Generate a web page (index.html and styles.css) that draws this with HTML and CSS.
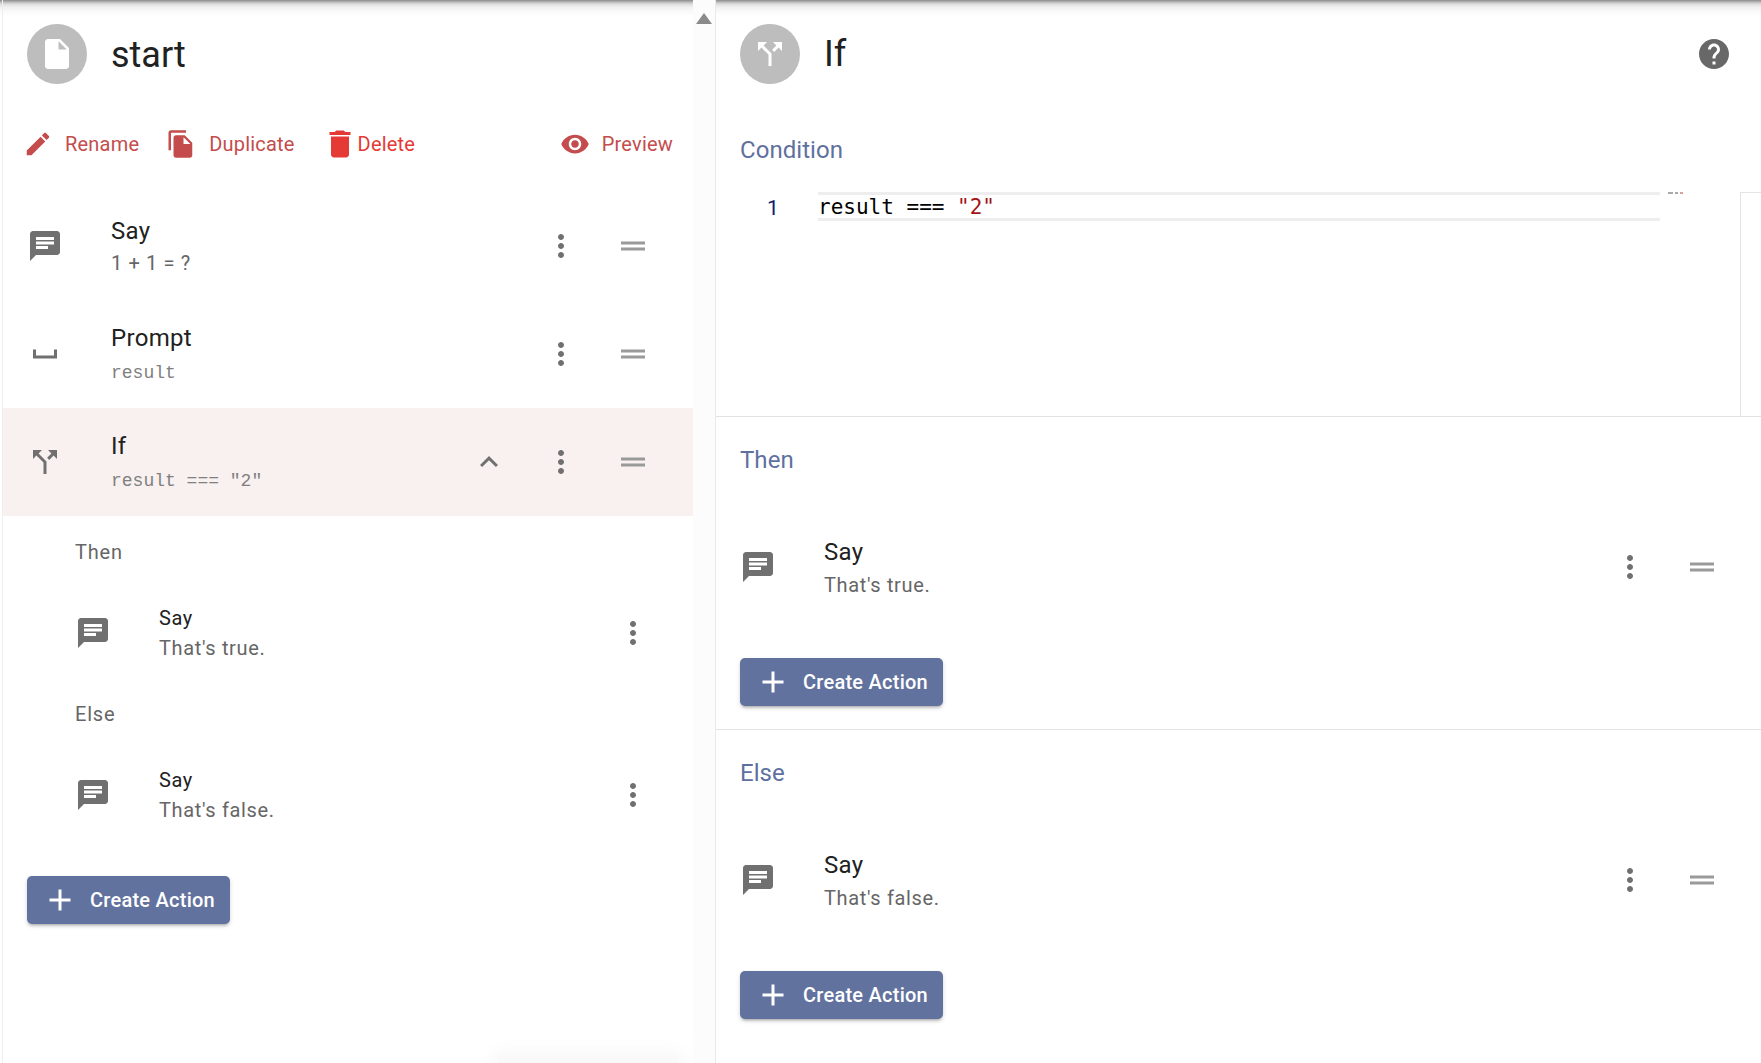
FILE: index.html
```html
<!DOCTYPE html>
<html lang="en">
<head>
<meta charset="utf-8">
<title>start</title>
<link rel="stylesheet" href="styles.css">
</head>
<body>
<svg class="sprites" aria-hidden="true">
  <symbol id="i-chat" viewBox="0 0 24 24"><path d="M20 2H4c-1.1 0-1.99.9-1.99 2L2 22l4-4h14c1.1 0 2-.9 2-2V4c0-1.1-.9-2-2-2zM6 9h12v2H6V9zm8 5H6v-2h8v2zm4-6H6V6h12v2z"/></symbol>
  <symbol id="i-space" viewBox="0 0 24 24"><path d="M18 9v4H6V9H4v6h16V9z"/></symbol>
  <symbol id="i-split" viewBox="0 0 24 24"><path d="M14 4l2.29 2.29-2.88 2.88 1.42 1.42 2.88-2.88L20 10V4zm-4 0H4v6l2.29-2.29 4.71 4.7V20h2v-8.41l-5.29-5.3z"/></symbol>
  <symbol id="i-up" viewBox="0 0 24 24"><path d="M7.41 15.41L12 10.83l4.59 4.58L18 14l-6-6-6 6z"/></symbol>
  <symbol id="i-more" viewBox="0 0 24 24"><path d="M12 8c1.1 0 2-.9 2-2s-.9-2-2-2-2 .9-2 2 .9 2 2 2zm0 2c-1.1 0-2 .9-2 2s.9 2 2 2 2-.9 2-2-.9-2-2-2zm0 6c-1.1 0-2 .9-2 2s.9 2 2 2 2-.9 2-2-.9-2-2-2z"/></symbol>
  <symbol id="i-drag" viewBox="0 0 24 24"><path d="M20 9H4v2h16V9zM4 15h16v-2H4v2z"/></symbol>
  <symbol id="i-pencil" viewBox="0 0 24 24"><path d="M3 17.25V21h3.75L17.81 9.94l-3.75-3.75L3 17.25zM20.71 7.04c.39-.39.39-1.02 0-1.41l-2.34-2.34c-.39-.39-1.02-.39-1.41 0l-1.83 1.83 3.75 3.75 1.83-1.83z"/></symbol>
  <symbol id="i-copy" viewBox="0 0 24 24"><path d="M16 1H4c-1.1 0-2 .9-2 2v14h2V3h12V1zm-1 4l6 6v10c0 1.1-.9 2-2 2H7.99C6.89 23 6 22.1 6 21l.01-14c0-1.1.89-2 1.99-2h7zm-1 7h5.5L14 6.5V12z"/></symbol>
  <symbol id="i-delete" viewBox="0 0 24 24"><path d="M6 19c0 1.1.9 2 2 2h8c1.1 0 2-.9 2-2V7H6v12zM19 4h-3.5l-1-1h-5l-1 1H5v2h14V4z"/></symbol>
  <symbol id="i-eye" viewBox="0 0 24 24"><path d="M12 4.5C7 4.5 2.73 7.61 1 12c1.73 4.39 6 7.5 11 7.5s9.27-3.11 11-7.5c-1.73-4.39-6-7.5-11-7.5zM12 17c-2.76 0-5-2.24-5-5s2.24-5 5-5 5 2.24 5 5-2.24 5-5 5zm0-8c-1.66 0-3 1.34-3 3s1.34 3 3 3 3-1.34 3-3-1.34-3-3-3z"/></symbol>
  <symbol id="i-file" viewBox="0 0 24 24"><path d="M6 2c-1.1 0-1.99.9-1.99 2L4 20c0 1.1.89 2 1.99 2H18c1.1 0 2-.9 2-2V8l-6-6H6zm7 7V3.5L18.5 9H13z"/></symbol>
  <symbol id="i-help" viewBox="0 0 24 24"><path d="M12 2C6.48 2 2 6.48 2 12s4.48 10 10 10 10-4.48 10-10S17.52 2 12 2zm1 17h-2v-2h2v2zm2.07-7.75l-.9.92C13.45 12.9 13 13.5 13 15h-2v-.5c0-1.1.45-2.1 1.17-2.83l1.24-1.26c.37-.36.59-.86.59-1.41 0-1.1-.9-2-2-2s-2 .9-2 2H8c0-2.21 1.79-4 4-4s4 1.79 4 4c0 .88-.36 1.68-.93 2.25z"/></symbol>
  <symbol id="i-plus" viewBox="0 0 24 24"><path d="M19 13h-6v6h-2v-6H5v-2h6V5h2v6h6v2z"/></symbol>
</svg>

<div class="app">
  <div class="topshade"></div>

  <section class="left">
    <header class="head">
      <span class="avatar"><svg class="ic"><use href="#i-file"/></svg></span>
      <h1 class="head-title">start</h1>
    </header>

    <nav class="toolbar">
      <a class="tool tool-rename"><svg class="ic-30"><use href="#i-pencil"/></svg><span>Rename</span></a>
      <a class="tool tool-dup"><svg class="ic-30"><use href="#i-copy"/></svg><span>Duplicate</span></a>
      <a class="tool tool-del"><svg class="ic"><use href="#i-delete"/></svg><span>Delete</span></a>
      <a class="tool tool-preview"><svg class="ic-30"><use href="#i-eye"/></svg><span>Preview</span></a>
    </nav>

    <div class="row">
      <svg class="ic row-ic"><use href="#i-chat"/></svg>
      <div class="row-text"><div class="title">Say</div><div class="sub">1 + 1 = ?</div></div>
      <span class="btn"><svg class="ic"><use href="#i-more"/></svg></span>
      <span class="btn btn-drag"><svg class="ic"><use href="#i-drag"/></svg></span>
    </div>
    <div class="row">
      <svg class="ic row-ic"><use href="#i-space"/></svg>
      <div class="row-text row-text-code"><div class="title">Prompt</div><div class="sub mono">result</div></div>
      <span class="btn"><svg class="ic"><use href="#i-more"/></svg></span>
      <span class="btn btn-drag"><svg class="ic"><use href="#i-drag"/></svg></span>
    </div>
    <div class="row row-active">
      <svg class="ic row-ic"><use href="#i-split"/></svg>
      <div class="row-text row-text-code"><div class="title">If</div><div class="sub mono">result === "2"</div></div>
      <span class="btn"><svg class="ic"><use href="#i-up"/></svg></span>
      <span class="btn"><svg class="ic"><use href="#i-more"/></svg></span>
      <span class="btn btn-drag"><svg class="ic"><use href="#i-drag"/></svg></span>
    </div>

    <div class="branch-label">Then</div>
    <div class="nested">
      <svg class="ic row-ic"><use href="#i-chat"/></svg>
      <div class="row-text"><div class="title-sm">Say</div><div class="sub-sm">That's true.</div></div>
      <span class="btn"><svg class="ic"><use href="#i-more"/></svg></span>
    </div>
    <div class="branch-label">Else</div>
    <div class="nested">
      <svg class="ic row-ic"><use href="#i-chat"/></svg>
      <div class="row-text"><div class="title-sm">Say</div><div class="sub-sm">That's false.</div></div>
      <span class="btn"><svg class="ic"><use href="#i-more"/></svg></span>
    </div>

    <div class="left-create">
      <button class="create"><svg class="ic"><use href="#i-plus"/></svg><span>Create Action</span></button>
    </div>
    <div class="ghost"></div>
  </section>

  <div class="gutter"><span class="arrow"></span></div>

  <main class="right">
    <header class="head">
      <span class="avatar avatar-r"><svg class="ic"><use href="#i-split"/></svg></span>
      <h2 class="head-title head-if">If</h2>
      <svg class="ic help"><use href="#i-help"/></svg>
    </header>

    <section class="cond">
      <h3 class="sec-title sec-cond">Condition</h3>
      <div class="editor">
        <div class="lineno">1</div>
        <div class="code"><span>result === </span><span class="str">"2"</span></div>
        <div class="mini"><i class="tick"></i><i class="tick tick-s"></i><i class="tick tick-r"></i></div>
        <div class="ruler"></div>
      </div>
    </section>

    <section class="branch">
      <h3 class="sec-title">Then</h3>
      <div class="row row-r">
        <svg class="ic row-ic"><use href="#i-chat"/></svg>
        <div class="row-text"><div class="title">Say</div><div class="sub">That's true.</div></div>
        <span class="btn"><svg class="ic"><use href="#i-more"/></svg></span>
        <span class="btn btn-drag"><svg class="ic"><use href="#i-drag"/></svg></span>
      </div>
      <button class="create"><svg class="ic"><use href="#i-plus"/></svg><span>Create Action</span></button>
    </section>

    <section class="branch">
      <h3 class="sec-title">Else</h3>
      <div class="row row-r">
        <svg class="ic row-ic"><use href="#i-chat"/></svg>
        <div class="row-text"><div class="title">Say</div><div class="sub">That's false.</div></div>
        <span class="btn"><svg class="ic"><use href="#i-more"/></svg></span>
        <span class="btn btn-drag"><svg class="ic"><use href="#i-drag"/></svg></span>
      </div>
      <button class="create"><svg class="ic"><use href="#i-plus"/></svg><span>Create Action</span></button>
    </section>
  </main>
</div>
</body>
</html>
```
FILE: styles.css
```css
* { box-sizing: border-box; }
html, body { margin: 0; height: 100%; background: #fff; overflow: hidden; }
body { font-family: Roboto, "Liberation Sans", sans-serif; color: #212121; }
.sprites { display: none; }
h1, h2, h3 { margin: 0; font-weight: 400; }

.app { position: relative; display: flex; height: 1063px; width: 1761px; overflow: hidden; }
.topshade {
  position: absolute; left: 0; right: 0; top: 0; height: 16px; pointer-events: none;
  background: linear-gradient(#8a8a8a 0, #b8b8b8 2px, #dcdcdc 4px, #f0f0f0 7px, #f9f9f9 11px, rgba(255,255,255,0) 16px);
}

.ic { width: 36px; height: 36px; fill: currentColor; display: block; flex: none; }
.ic-30 { width: 30px; height: 30px; fill: currentColor; display: block; flex: none; }

.left { position: relative; width: 691px; margin-left: 2px; border-left: 1px solid #eee; flex: none; }
.gutter { position: relative; width: 23px; flex: none; background: #fcfcfc; border-right: 1px solid #e9e9e9; }
.arrow {
  position: absolute; left: 3px; top: 13px; width: 0; height: 0;
  border-left: 8px solid transparent; border-right: 8px solid transparent; border-bottom: 11px solid #8a8a8a;
}
.right { flex: 1; min-width: 0; }

.head { display: flex; align-items: center; height: 108px; padding-left: 24px; }
.avatar {
  width: 60px; height: 60px; border-radius: 50%; background: #bdbdbd; color: #fff;
  display: flex; align-items: center; justify-content: center; flex: none;
}
.head-title { font-size: 36px; line-height: 48px; margin: 2px 0 0 24px; color: #212121; }
.head-if { margin: 0 0 0 24px; }
.help { margin-left: auto; margin-right: 29px; color: #686868; }

.toolbar { display: flex; align-items: center; height: 72px; margin-bottom: 12px; color: #c44c4c; font-size: 20px; letter-spacing: .2px; }
.tool { display: flex; align-items: center; line-height: 36px; }
.tool-rename { margin-left: 20px; gap: 12px; }
.tool-dup { margin-left: 27px; gap: 13px; }
.tool-del { margin-left: 27px; gap: 0; color: #e53935; }
.tool-preview { margin-left: auto; margin-right: 20px; gap: 12px; }

.row { display: flex; align-items: center; height: 108px; padding: 0 24px; color: #707070; }
.row-active { background: #f9f1f0; }
.row-text { flex: 1; min-width: 0; margin-left: 48px; padding-top: 2px; }
.row-text-code { padding-top: 0; }
.title { font-size: 24px; line-height: 32px; color: #212121; letter-spacing: .3px; }
.sub { font-size: 20px; line-height: 32px; color: #666; letter-spacing: .65px; }
.mono { font-family: "Liberation Mono", monospace; font-size: 18px; color: #808080; letter-spacing: 0; padding-top: 3px; margin-bottom: -3px; }
.btn { width: 72px; height: 72px; display: flex; align-items: center; justify-content: center; color: #707070; flex: none; }
.btn-drag { color: #9a9a9a; }

.branch-label { height: 72px; padding-left: 72px; font-size: 20px; line-height: 72px; color: #666; letter-spacing: .8px; }
.nested { display: flex; align-items: center; height: 90px; padding: 0 24px 0 72px; color: #707070; }
.nested .row-text { padding-top: 0; }
.title-sm { font-size: 20px; line-height: 30px; color: #212121; letter-spacing: .6px; }
.sub-sm { font-size: 20px; line-height: 30px; color: #666; letter-spacing: .65px; }

.left-create { padding: 36px 0 0 24px; }
.create {
  display: flex; align-items: center; width: 203px; height: 48px; padding: 0 0 0 15px; border: 0; border-radius: 5px;
  background: #62729e; color: #fff; font: 500 20px Roboto, sans-serif; letter-spacing: .25px;
  box-shadow: 0 3px 3px -2px rgba(0,0,0,.25), 0 2px 4px rgba(0,0,0,.16);
}
.create span { margin-left: 12px; }
.ghost {
  position: absolute; right: 10px; bottom: -12px; width: 190px; height: 24px;
  background: #f7f7f7; filter: blur(8px);
}

.cond { height: 309px; border-bottom: 1px solid #e2e2e2; }
.sec-title { padding-left: 24px; font-size: 24px; line-height: 32px; color: #5f709f; letter-spacing: .05px; }
.sec-cond { padding-top: 26px; height: 84px; }
.editor { position: relative; display: flex; height: 224px; }
.lineno { width: 102px; padding: 4px 0 0 51px; font: 21px/24px Roboto, sans-serif; color: #0b216f; }
.code {
  width: 842px; height: 29px; border: solid #eee; border-width: 3px 0;
  font: 21px/25px "DejaVu Sans Mono", monospace; color: #000; white-space: pre;
}
.str { color: #a31515; }
.mini { position: relative; flex: 1; display: flex; gap: 2px; height: 2px; padding-left: 8px; }
.tick { width: 5px; height: 2px; background: #aaa; }
.tick-s { width: 3px; }
.tick-r { width: 3px; background: #d9a0a0; }
.ruler { position: absolute; left: 1024px; top: 0; bottom: 0; width: 21px; border: solid #e4e4e4; border-width: 1px 0 0 1px; }

.branch { height: 313px; border-bottom: 1px solid #e2e2e2; padding-top: 27px; }
.branch:last-child { border-bottom: 0; }
.row-r { margin-top: 37px; padding-right: 23px; }
.row-r .row-text { margin-left: 48px; }
.row-r .sub { padding-top: 1px; margin-bottom: -1px; }
.branch .create { margin: 37px 0 0 24px; }
```
